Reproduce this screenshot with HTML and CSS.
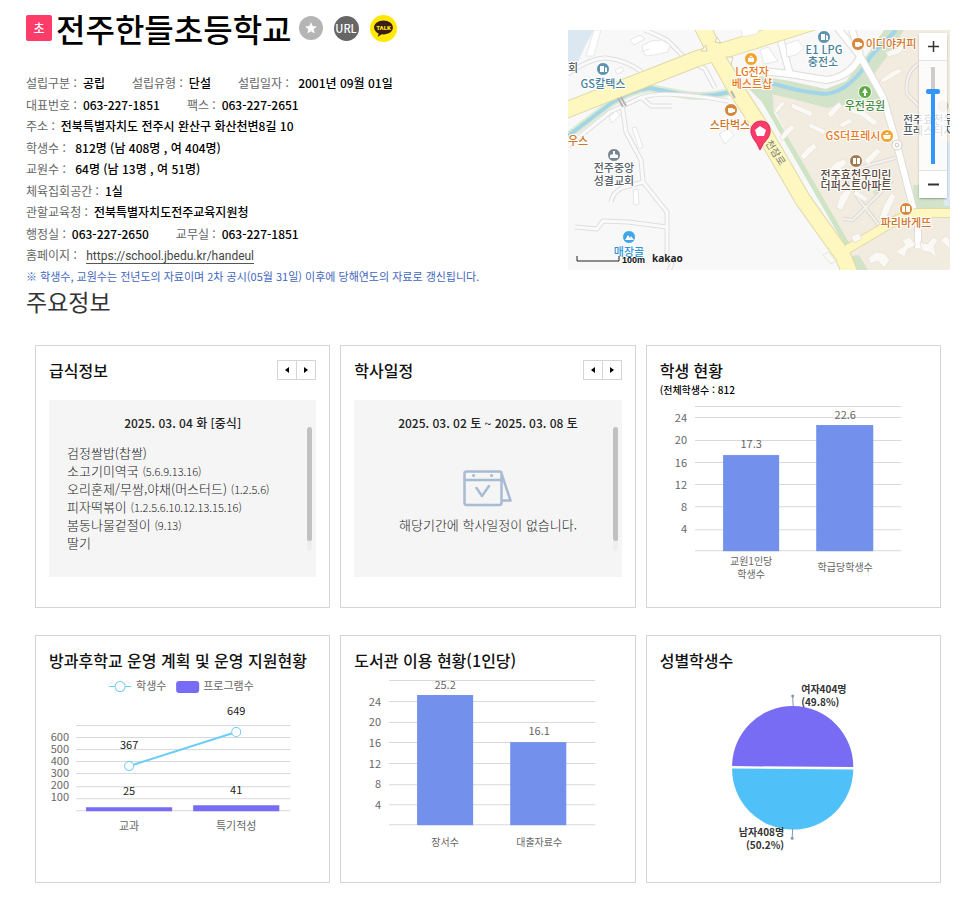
FILE: index.html
```
<!DOCTYPE html>
<html lang="ko">
  <head>
    <meta charset="utf-8">
    <title>전주한들초등학교</title>
    <link rel="stylesheet" href="styles.css">
  </head>

  <body>
    <div class="page">
      <header class="school">
        <div class="school-info">
          <div class="school-name">
            <span class="badge">초</span>
            <h1>전주한들초등학교</h1>
            <div class="links">
              <button class="icon-btn star" type="button" aria-label="관심학교">
                <svg width="24" height="24" viewBox="0 0 24 24"><circle cx="12" cy="12" r="12" fill="#b5b5b5"/><path d="M12 6.2l1.7 3.9 4.2.4-3.2 2.8 1 4.2-3.7-2.2-3.7 2.2 1-4.2-3.2-2.8 4.2-.4z" fill="#fff"/></svg>
              </button>
              <button class="icon-btn url" type="button">URL</button>
              <button class="icon-btn" type="button" aria-label="카카오톡 공유">
                <svg width="27" height="27" viewBox="0 0 27 27">
                  <circle cx="13.500" cy="13.500" r="13.500" fill="#ffe900"/>
                  <path d="M13.500 5.500c-5.200 0-9.400 3-9.400 7 0 2.600 1.800 4.800 4.500 6l-.8 3.300 4-2.500 1.700.1c5.200 0 9.400-3 9.400-6.900s-4.200-7-9.400-7z" fill="#3b1c1c"/>
                  <text x="13.500" y="15" class="talk-text">TALK</text>
                </svg>
              </button>
            </div>
          </div>

          <div class="info">
            <dl><dt>설립구분 :</dt><dd>공립</dd><dt>설립유형 :</dt><dd>단설</dd><dt>설립일자 :</dt><dd>&nbsp;2001년 09월 01일</dd></dl>
            <dl><dt>대표번호 :</dt><dd>063-227-1851</dd><dt>팩스 :</dt><dd>063-227-2651</dd></dl>
            <dl><dt>주소 :</dt><dd>전북특별자치도 전주시 완산구 화산천변8길 10</dd></dl>
            <dl><dt>학생수 :</dt><dd>&nbsp;812명 (남 408명 , 여 404명)</dd></dl>
            <dl><dt>교원수 :</dt><dd>&nbsp;64명 (남 13명 , 여 51명)</dd></dl>
            <dl><dt>체육집회공간 :</dt><dd>1실</dd></dl>
            <dl><dt>관할교육청 :</dt><dd>전북특별자치도전주교육지원청</dd></dl>
            <dl><dt>행정실 :</dt><dd>063-227-2650</dd><dt>교무실 :</dt><dd>063-227-1851</dd></dl>
            <dl><dt>홈페이지 :</dt><dd>&nbsp;<a href="https://school.jbedu.kr/handeul">https://school.jbedu.kr/handeul</a></dd></dl>
          </div>
          <p class="notice">※ 학생수, 교원수는 전년도의 자료이며 2차 공시(05월 31일) 이후에 당해연도의 자료로 갱신됩니다.</p>
        </div>

        <div class="map">
          <svg class="map-canvas" viewBox="0 0 382 240" preserveAspectRatio="xMidYMid slice">
            <rect width="382" height="240" fill="#f8f8f8"/>
            <path d="M0 0h26l-8 14-8 18L0 42z" fill="#dbe7f1"/>
            <path d="M26 0h7l-7 26h-8z" fill="#fff" stroke="#e8e8e8"/>
            <path d="M196 60l29 8 33 7 57-8-14-37 20-30h61v240h-92z" fill="#f2ece0"/>
            <path d="M192 46l30 5 36 8 20-8 24-30 14-21h20l-18 28-12 16 9 24-56 10-34-9-45-10z" fill="#d2e3c9"/>
            <path d="M180 58l24 0 2 26z" fill="#d2e3c9"/>
            <path d="M345 155h37v25l-36-2z" fill="#d2e3c9"/>
            <path d="M371 112h11v64h-6z" fill="#dce8f2"/>
            <path d="M194 67l86 149" stroke="#cfe3c5" stroke-width="5"/>
            <path d="M284 226l7-1 9 15h-12z" fill="#d2e3c9"/>
            <path d="M304 162l6-4 6 3-6 6z" fill="#d9e6c7"/>

            <!-- river -->
            <g fill="none">
              <path d="M0 106l42-32Q62 60 82 58l30 6q25 5 53-3" stroke="#dcead2" stroke-width="8"/>
              <path d="M0 106l42-32Q62 60 82 58l30 6q25 5 53-3" stroke="#a3d5e6" stroke-width="4"/>
              <path d="M190 53l12 0 23 6q18 4 33 5 14-2 24-11 14-12 20-26l26-27" stroke="#a3d5e9" stroke-width="4"/>
            </g>

            <!-- side streets -->
            <g fill="none" stroke="#dedede" stroke-width="5" stroke-linejoin="round">
              <path d="M0 44q22-16 38-16 20 2 36 14"/>
              <path d="M77 0q10 4 22 10l18 18 20 11 10 19"/>
              <path d="M0 116l42-34 30-14q22-9 88 3M74 68l9 8h21"/>
              <path d="M54 74l4 28 15 28 2 22 24 30v46l5 6-4 9"/>
              <path d="M75 152l-21 6q-9 4-11 14M7 197l22 2 6-8 25 1 39 5"/>
            </g>
            <g fill="none" stroke="#fafafa" stroke-width="3" stroke-linejoin="round">
              <path d="M0 44q22-16 38-16 20 2 36 14"/>
              <path d="M77 0q10 4 22 10l18 18 20 11 10 19"/>
              <path d="M0 116l42-34 30-14q22-9 88 3M74 68l9 8h21"/>
              <path d="M54 74l4 28 15 28 2 22 24 30v46l5 6-4 9"/>
              <path d="M75 152l-21 6q-9 4-11 14M7 197l22 2 6-8 25 1 39 5"/>
            </g>
            <g fill="none" stroke="#dcd9d6" stroke-width="4">
              <path d="M275 189l10 1 40-40M278 144l12 24 23 30M291 138l36-10M350 34q-14 10-11 30l12 12M355 36h15"/>
            </g>
            <g fill="none" stroke="#f6f3ef" stroke-width="2">
              <path d="M275 189l10 1 40-40M278 144l12 24 23 30M291 138l36-10M350 34q-14 10-11 30l12 12M355 36h15"/>
            </g>
            <g fill="none" stroke="#dfdcd8" stroke-width="8">
              <path d="M268-4l24 30 23 41 14 48 17 66M292 27q-10 20-34 23l-36-6-36-4M212 8l10 36M350 188v30M284 0l8 24"/>
            </g>
            <g fill="none" stroke="#fff" stroke-width="6">
              <path d="M268-4l24 30 23 41 14 48 17 66M292 27q-10 20-34 23l-36-6-36-4M212 8l10 36M350 188v30M284 0l8 24"/>
            </g>

            <!-- main roads -->
            <g fill="none" stroke="#e0d9a8">
              <path d="M-4 81L128 29l42-13L246-8" stroke-width="17"/>
              <path d="M134-4l14 28 18 32 26 40 43 74 40 56 8 20" stroke-width="17"/>
              <path d="M276 221l49-29q14-9 26-9h36" stroke-width="10"/>
            </g>
            <g fill="none" stroke="#fef7bf">
              <path d="M-4 81L128 29l42-13L246-8" stroke-width="15"/>
              <path d="M134-4l14 28 18 32 26 40 43 74 40 56 8 20" stroke-width="15"/>
              <path d="M276 221l49-29q14-9 26-9h36" stroke-width="8"/>
            </g>
            <path d="M138 15l-5 6h6zM147 12l6 1-4-6zM158 27h7l-2 8z" fill="#f8f8f8" stroke="#d9d3a6"/>
            <circle cx="329" cy="115" r="5" fill="#fff" stroke="#d5d0c8"/>
            <circle cx="329" cy="115" r="2" fill="#fff" stroke="#c9c4bb"/>
            <path d="M50 68l5 9M53 67l5 9" stroke="#b5b5b5" stroke-width="2"/>
            <path d="M163 61l4 7" stroke="#b5b5b5" stroke-width="2"/>

            <!-- buildings -->
            <g fill="#fff" stroke="#e8e6e3">
              <path d="M62 10l10-5 5 4-11 6zM74 16l9-5 11-1 8 5-2 7-14 3-8 1-3-5zM73 22l8-3"/>
              <path d="M47 40l7-3 2 4-7 3zM41 87l7-6 4 4-8 8zM64 98l4-1 7 20-4 2zM65 160l5-1 1 15-5 1z"/>
              <path d="M151 104l9-5 6 6-9 9zM218 14l12-4 6 8-8 7-9 2zM192 20l8-3 10 14-14 3zM172-2h20l-3 6-14 3z"/>
            </g>
            <g fill="#fbf9f5" stroke="#ebe5da">
              <path d="M206 80l8-9 3 3-8 9zM224 73l12 5 9 4-2 5-20-9z"/>
              <path d="M212 107l5-7 7-6 3 4-13 13zM232 126l8-9 6-4 3 4-13 13z"/>
              <path d="M242 93l9 4 7 3-2 5-16-8zM259 84l5-6 7-6 3 4-11 12z"/>
              <path d="M271 94l11-6 3 4-11 6zM258 142l10-10 8-3 3 4-14 13z"/>
              <path d="M268 178l4-12 8-8 4 3-10 19zM311 188l5-13 7-12 5 3-10 23z"/>
              <path d="M288 160l12 8-3 4-12-8zM312 50l11-8 9-4 2 4-19 11zM318 22l12-4 5-7 4 4-8 9-11 3z"/>
              <path d="M327 222l10-7-3-5 8-3 6 8-9 5-2 7zM300 228l8-6 8 1 6 7-6 8-6-7-8 3zM352 212l7 2 6-7 5 3-4 7 3 11-6-5-9-2z"/>
              <path d="M372 210l6-4 4 4v9zM283 206l8-3 3 6-8 4zM255 225l5-3 8 9-5 3z"/>
              <path d="M284 78l14 4 12 10-4 4-13-10-10-3zM296 130l13-12 4 4-13 13z"/>
            </g>

            <!-- place markers -->
            <g stroke="#fff">
              <circle cx="35" cy="39" r="6.500" fill="#5d93ad"/>
              <circle cx="183" cy="29" r="6.500" fill="#f3a32f"/>
              <circle cx="163" cy="80" r="6.500" fill="#d8873a"/>
              <circle cx="46" cy="125" r="6.500" fill="#76858f"/>
              <circle cx="61" cy="207" r="6.500" fill="#3fa5e6"/>
              <circle cx="256" cy="7" r="6.500" fill="#5d93ad"/>
              <circle cx="290" cy="14" r="6.500" fill="#d8873a"/>
              <circle cx="297" cy="62" r="6.500" fill="#60a948"/>
              <circle cx="319" cy="106" r="6.500" fill="#f3a32f"/>
              <circle cx="288" cy="131" r="6.500" fill="#a17b4f"/>
              <circle cx="338" cy="179" r="6.500" fill="#d8873a"/>
              <circle cx="375" cy="76" r="6.500" fill="#d9c9ad"/>
            </g>
            <g fill="#fff">
              <path d="M32 36h4v6h-4zM37 37l2 1v4h-2zM253 4h4v6h-4zM258 5l2 1v4h-2z"/>
              <path d="M180 28h6v4h-6zM181 28q2-5 4 0h-1q-1-3-2 0z"/>
              <path d="M160 78h5v1h2v3h-2l-1 1h-3l-1-1zM287 12h5v1h2v3h-2l-1 1h-3l-1-1z"/>
              <path d="M42 128v-3l3-1v-3h2v3l3 1v3zM57 210l3-5 2 3 1-2 3 4z"/>
              <path d="M297 58l3 5h-2v3h-2v-3h-2zM315 105h8l-1 4h-6zM317 104l2-2 2 2z"/>
              <path d="M285 128h3v6h-3zM289 128h3v6h-3zM334 176h3v6h-3zM338 176h4v6h-4z"/>
            </g>

            <g class="place">
              <text x="0" y="42" class="start gray">회</text>
              <text x="35" y="58" class="blue">GS칼텍스</text>
              <text x="184" y="46" class="orange">LG전자</text>
              <text x="184" y="58" class="orange">베스트샵</text>
              <text x="162" y="99" class="brown">스타벅스</text>
              <text x="0" y="115" class="start brown">우스</text>
              <text x="46" y="142" class="gray">전주중앙</text>
              <text x="46" y="155" class="gray">성결교회</text>
              <text x="61" y="226" class="sky">매장골</text>
              <text x="256" y="24" class="blue">E1 LPG</text>
              <text x="255" y="36" class="blue">충전소</text>
              <text x="323" y="18" class="brown">이디야커피</text>
              <text x="297" y="80" class="green">우전공원</text>
              <text x="285" y="110" class="orange">GS더프레시</text>
              <text x="335" y="94" class="start gray">전주효천우</text>
              <text x="335" y="105" class="start gray">프레스티지</text>
              <text x="288" y="149" class="coffee">전주효천우미린</text>
              <text x="288" y="160" class="coffee">더퍼스트아파트</text>
              <text x="338" y="197" class="brown">파리바게뜨</text>
            </g>
            <text class="road-name" transform="translate(197 113) rotate(57)">천잠로</text>

            <path d="M192 120q-3-7-7-12-3-5-2-9 2-8 10-8t9 8q1 4-2 9-5 5-8 12z" fill="#fb3b6c" stroke="#d92c59"/>
            <path d="M192 96l6 4-2 6h-7l-2-6z" fill="#fff"/>

            <path d="M9 226v5h42v-5" fill="none" stroke="#222"/>
            <text x="54" y="233" class="scale">100m</text>
            <text x="84" y="232" class="kakao">kakao</text>
          </svg>

          <div class="zoom">
            <button type="button" aria-label="확대"><svg width="11" height="11" viewBox="0 0 11 11"><path d="M5.500 0v11M0 5.500h11" stroke="#333" stroke-width="1.500"/></svg></button>
            <div class="zoom-track"><input type="range" min="0" max="100" value="76" aria-label="지도 확대 수준"></div>
            <button type="button" aria-label="축소"><svg width="11" height="11" viewBox="0 0 11 11"><path d="M0 5.500h11" stroke="#333" stroke-width="2"/></svg></button>
          </div>
        </div>
      </header>

      <h2>주요정보</h2>

      <main class="cards">
        <section class="card">
          <div class="card-head">
            <h3>급식정보</h3>
            <div class="pager">
              <button type="button" aria-label="이전"><svg width="4" height="6" viewBox="0 0 4 6"><path d="M4 0v6L0 3z"/></svg></button>
              <button type="button" aria-label="다음"><svg width="4" height="6" viewBox="0 0 4 6"><path d="M0 0v6l4-3z"/></svg></button>
            </div>
          </div>
          <div class="panel">
            <p class="date">2025. 03. 04 화 [중식]</p>
            <ul class="menu">
              <li>검정쌀밥(찹쌀)</li>
              <li>소고기미역국 <small>(5.6.9.13.16)</small></li>
              <li>오리훈제/무쌈,야채(머스터드) <small>(1.2.5.6)</small></li>
              <li>피자떡볶이 <small>(1.2.5.6.10.12.13.15.16)</small></li>
              <li>봄동나물겉절이 <small>(9.13)</small></li>
              <li>딸기</li>
            </ul>
            <div class="scrollbar"><span></span></div>
          </div>
        </section>

        <section class="card">
          <div class="card-head">
            <h3>학사일정</h3>
            <div class="pager">
              <button type="button" aria-label="이전"><svg width="4" height="6" viewBox="0 0 4 6"><path d="M4 0v6L0 3z"/></svg></button>
              <button type="button" aria-label="다음"><svg width="4" height="6" viewBox="0 0 4 6"><path d="M0 0v6l4-3z"/></svg></button>
            </div>
          </div>
          <div class="panel">
            <p class="date">2025. 03. 02 토 ~ 2025. 03. 08 토</p>
            <div class="empty">
              <svg width="49" height="37" viewBox="0 0 49 37" fill="none" stroke="#a9bbd3" stroke-width="2.500" stroke-linejoin="round" stroke-linecap="round">
                <rect x="1.500" y="1.500" width="37" height="33.500" rx="2"/>
                <path d="M1.500 10h37M13.500 18l5.500 8 7-10M39 5l8.500 25.500H39"/>
                <path d="M10.500 5.500h.1M28.500 5.500h.1" stroke-width="3"/>
              </svg>
              <p>해당기간에 학사일정이 없습니다.</p>
            </div>
            <div class="scrollbar"><span></span></div>
          </div>
        </section>

        <section class="card">
          <h3>학생 현황</h3>
          <p class="sub">(전체학생수 : 812</p>
          <svg class="chart" viewBox="0 0 267 180">
            <path class="grid" d="M35 9.500h206M35 20.500h206M35 43.500h206M35 65.500h206M35 87.500h206M35 109.500h206M35 132.500h206M35 153.500h206"/>
            <g class="bar"><rect x="63" y="58" width="56" height="96"/><rect x="156" y="28" width="57" height="126"/></g>
            <g class="tick">
              <text x="27" y="25">24</text><text x="27" y="47">20</text><text x="27" y="70">16</text>
              <text x="27" y="92">12</text><text x="27" y="114">8</text><text x="27" y="136">4</text>
            </g>
            <g class="value"><text x="91" y="51">17.3</text><text x="185" y="22">22.6</text></g>
            <g class="label"><text x="91" y="168">교원1인당</text><text x="91" y="181">학생수</text><text x="185" y="174">학급당학생수</text></g>
          </svg>
        </section>

        <section class="card">
          <h3>방과후학교 운영 계획 및 운영 지원현황</h3>
          <svg class="chart" viewBox="0 0 267 179">
            <path d="M60 13.500h22" stroke="#73cdf8"/>
            <circle cx="71" cy="13.500" r="5" fill="#fff" stroke="#73cdf8"/>
            <rect x="127" y="8" width="23" height="12" rx="3" fill="#776cf5"/>
            <g class="legend"><text x="87" y="17">학생수</text><text x="154" y="17">프로그램수</text></g>
            <path class="grid" d="M27 52.500h214M27 64.500h214M27 76.500h214M27 88.500h214M27 100.500h214M27 113.500h214M27 125.500h214M27 137.500h214"/>
            <g class="tick">
              <text x="20" y="68">600</text><text x="20" y="80">500</text><text x="20" y="92">400</text>
              <text x="20" y="104">300</text><text x="20" y="116">200</text><text x="20" y="128">100</text>
            </g>
            <path d="M37 134h86v4H37zM144 132h86v6h-86z" fill="#776cf5"/>
            <path d="M80 93L187 59" stroke="#6dcdf8" stroke-width="2"/>
            <g fill="#fff" stroke="#6dcdf8"><circle cx="80" cy="93" r="4.500"/><circle cx="187" cy="59" r="4.500"/></g>
            <g class="value dark">
              <text x="80" y="76">367</text><text x="187" y="42">649</text>
              <text x="80" y="122">25</text><text x="187" y="121">41</text>
            </g>
            <g class="value"><text x="80" y="157">교과</text><text x="187" y="157">특기적성</text></g>
          </svg>
        </section>

        <section class="card">
          <h3>도서관 이용 현황(1인당)</h3>
          <svg class="chart" viewBox="0 0 267 179">
            <path class="grid" d="M35 7.500h206M35 28.500h206M35 49.500h206M35 69.500h206M35 90.500h206M35 111.500h206M35 131.500h206M35 151.500h206"/>
            <g class="bar"><rect x="63" y="22" width="56" height="130"/><rect x="156" y="69" width="56" height="83"/></g>
            <g class="tick">
              <text x="27" y="33">24</text><text x="27" y="53">20</text><text x="27" y="74">16</text>
              <text x="27" y="95">12</text><text x="27" y="115">8</text><text x="27" y="136">4</text>
            </g>
            <g class="value"><text x="91" y="16">25.2</text><text x="185" y="62">16.1</text></g>
            <g class="label"><text x="91" y="173">장서수</text><text x="185" y="173">대출자료수</text></g>
          </svg>
        </section>

        <section class="card">
          <h3>성별학생수</h3>
          <svg class="chart" viewBox="0 0 267 179">
            <path d="M72 93a60.500 60.500 0 0 1 121 1z" fill="#776cf3"/>
            <path d="M72 95.500a60.500 60.500 0 0 0 121 .8z" fill="#4fc1f8"/>
            <path d="M133 33l-.5-10M132.500 155l-.5 10" stroke="#7f98ad"/>
            <circle cx="132.500" cy="23" r="1.500" fill="#7f98ad"/><circle cx="132" cy="165" r="1.500" fill="#7f98ad"/>
            <g class="pie-label">
              <text x="141" y="20">여자404명</text><text x="141" y="33">(49.8%)</text>
              <text x="124" y="163" class="end">남자408명</text><text x="124" y="176" class="end">(50.2%)</text>
            </g>
          </svg>
        </section>
      </main>
    </div>
  </body>
</html>
```
FILE: styles.css
```
* {
  margin: 0;
  padding: 0;
  box-sizing: border-box;
}

body {
  background: #fff;
  color: #000;
  font-family: "Noto Sans CJK KR", sans-serif;
  font-size: 12px;
  line-height: 18px;
}

button {
  border: 0;
  background: none;
  font-family: inherit;
  cursor: pointer;
}

.page {
  padding: 8px 16px 20px 26px;
}

/* school header */

.school {
  display: flex;
}

.school-info {
  flex: 1;
  display: flex;
  flex-direction: column;
}

.school-name {
  display: flex;
  align-items: center;
  height: 40px;
  margin-bottom: 26px;
}

.badge {
  width: 26px;
  height: 26px;
  margin-right: 4px;
  border-radius: 2px;
  background: #fd3c6a;
  color: #fff;
  font-weight: 500;
  line-height: 26px;
  text-align: center;
}

h1 {
  font-size: 32px;
  font-weight: 500;
  line-height: 36px;
}

.links {
  display: flex;
  align-items: center;
  gap: 11px;
  margin-left: 7px;
}

.icon-btn svg {
  display: block;
}

.url {
  width: 25px;
  height: 25px;
  border-radius: 50%;
  background: #666;
  color: #fff;
  font-size: 11px;
  font-weight: 500;
  line-height: 25px;
}

.talk-text {
  fill: #ffe900;
  font-family: Roboto, sans-serif;
  font-size: 6px;
  font-weight: 900;
  text-anchor: middle;
}

.info {
  flex: 1;
  display: flex;
  flex-direction: column;
  justify-content: space-between;
}

.info dl {
  display: flex;
}

.info dt {
  margin-right: 6px;
  color: #666;
}

.info dd {
  margin-right: 27px;
  font-weight: 500;
}

.info a {
  border-bottom: 1px solid #555;
  color: #444;
  font-family: Roboto, sans-serif;
  font-weight: 400;
  text-decoration: none;
}

.notice {
  margin-top: 2px;
  color: #3f66bd;
  font-size: 11px;
}

h2 {
  color: #333;
  font-size: 23px;
  font-weight: 400;
  line-height: 32px;
}

/* map */

.map {
  position: relative;
  flex: 0 1 382px;
  height: 240px;
  margin: 22px 0 15px;
}

.map-canvas {
  display: block;
  width: 100%;
  height: 100%;
}

.place {
  font-size: 11px;
  font-weight: 500;
  text-anchor: middle;
  paint-order: stroke;
  stroke: #fff;
  stroke-width: 2px;
}

.place .start {
  text-anchor: start;
}

.gray {
  fill: #55606a;
}

.blue {
  fill: #46809b;
}

.orange {
  fill: #e87a22;
}

.brown {
  fill: #cf7426;
}

.sky {
  fill: #2e94d6;
}

.green {
  fill: #3f8a3c;
}

.coffee {
  fill: #5b4a40;
}

.road-name {
  fill: #777;
  font-size: 10px;
}

.scale {
  fill: #111;
  font-family: "Liberation Sans", sans-serif;
  font-size: 9px;
  font-weight: 700;
}

.kakao {
  fill: #222;
  font-family: "Noto Sans", sans-serif;
  font-size: 10px;
  font-weight: 700;
}

.zoom {
  position: absolute;
  top: 3px;
  right: 3px;
  width: 28px;
  border-radius: 2px;
  background: rgba(255, 255, 255, 0.8);
  box-shadow: 0 1px 2px rgba(0, 0, 0, 0.3);
}

.zoom button {
  display: flex;
  align-items: center;
  justify-content: center;
  width: 28px;
  height: 27px;
  background: #fff;
}

.zoom-track {
  display: flex;
  justify-content: center;
  padding: 6px 0;
  border-top: 1px solid #e3e3e3;
  border-bottom: 1px solid #e3e3e3;
}

.zoom input {
  appearance: none;
  writing-mode: vertical-lr;
  direction: rtl;
  width: 14px;
  height: 97px;
  background: linear-gradient(#ccc 25%, #3396ff 25%) center / 4px 100% no-repeat;
}

.zoom input::-webkit-slider-thumb {
  appearance: none;
  width: 14px;
  height: 5px;
  border-radius: 2px;
  background: #3396ff;
}

/* cards */

.cards {
  display: grid;
  grid-template-columns: repeat(3, 1fr);
  gap: 27px 10px;
  margin: 28px 9px 0;
}

.card {
  padding: 13px 13px 30px;
  border: 1px solid #d5d5d5;
}

.card-head {
  display: flex;
  justify-content: space-between;
  margin-bottom: 18px;
}

h3 {
  color: #111;
  font-size: 16px;
  font-weight: 500;
  line-height: 23px;
  white-space: nowrap;
}

.pager {
  display: flex;
  height: 20px;
  margin-top: 1px;
  border: 1px solid #d5d5d5;
}

.pager button {
  display: flex;
  align-items: center;
  justify-content: center;
  width: 18px;
}

.pager button + button {
  width: 19px;
  border-left: 1px solid #d5d5d5;
}

.panel {
  position: relative;
  min-height: 177px;
  padding: 14px 18px;
  background: #f5f5f5;
}

.date {
  color: #222;
  font-weight: 500;
  text-align: center;
}

.menu {
  margin-top: 12px;
  color: #222;
  font-size: 13px;
  font-weight: 300;
  list-style: none;
  white-space: nowrap;
}

.menu small {
  font-size: 11px;
}

.scrollbar {
  position: absolute;
  top: 27px;
  right: 4px;
  width: 5px;
  height: 124px;
  border-radius: 3px;
  background: #eee;
}

.scrollbar span {
  display: block;
  height: 114px;
  border-radius: 3px;
  background: #c1c1c1;
}

.empty {
  display: flex;
  flex-direction: column;
  align-items: center;
  gap: 9px;
  margin-top: 38px;
  color: #222;
  font-size: 13px;
  font-weight: 300;
}

.sub {
  font-size: 10px;
  font-weight: 500;
  line-height: 15px;
}

/* charts */

.chart {
  display: block;
  width: 100%;
  overflow: visible;
  fill: #666;
  font-size: 11px;
}

h3 + .chart {
  margin-top: 1px;
}

.grid {
  fill: none;
  stroke: #d9d9d9;
}

.bar {
  fill: #7391ec;
}

.tick {
  text-anchor: end;
}

.value {
  text-anchor: middle;
}

.dark {
  fill: #222;
}

.label {
  font-size: 10px;
  text-anchor: middle;
}

.pie-label {
  fill: #333;
  font-size: 10px;
  font-weight: 700;
}

.end {
  text-anchor: end;
}
```
